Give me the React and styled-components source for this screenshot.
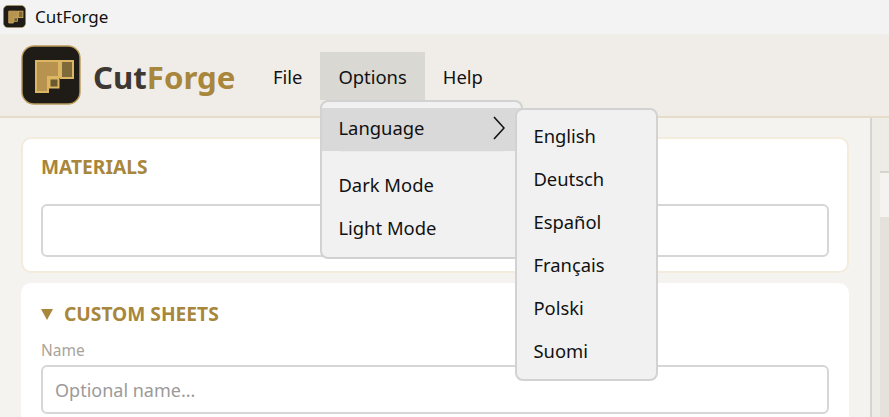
import React from 'react';
import styled, { createGlobalStyle } from 'styled-components';

const GlobalStyle = createGlobalStyle`
  html, body { margin: 0; padding: 0; height: 100%; overflow: hidden; }
  body { font-family: "Noto Sans", "Open Sans", sans-serif; color: #111; background: #f5f3ef; }
  * { box-sizing: border-box; }
`;

const Logo = ({ size }) => (
  <svg width={size} height={size} viewBox="0 0 60 60">
    <rect x="1" y="1" width="58" height="58" rx="12" fill="#1f1c18" stroke="#b99a58" strokeWidth="1.4" />
    <path d="M15 16H38V32H27V47H15Z" fill="#b8934f" stroke="#dcb662" strokeWidth="2" />
    <rect x="40" y="16" width="12" height="17" fill="#7f6a3a" stroke="#dcb662" strokeWidth="2" />
    <rect x="28.5" y="33.5" width="9" height="9" fill="#6a5830" stroke="#dcb662" strokeWidth="2" />
  </svg>
);

const menuLanguages = ['English', 'Deutsch', 'Español', 'Français', 'Polski', 'Suomi'];

export default function App() {
  return (
    <Page>
      <GlobalStyle />
      <TitleBar>
        <Logo size={23} />
        <TitleText>CutForge</TitleText>
      </TitleBar>
      <Header>
        <Logo size={60} />
        <Brand>Cut<BrandAccent>Forge</BrandAccent></Brand>
        <MenuBar>
          <MenuItem>File</MenuItem>
          <MenuItem $open>
            Options
            <Dropdown>
              <DropRow $active>
                Language
                <svg width="12" height="24" viewBox="0 0 12 24">
                  <path d="M1 1L11 12L1 23" fill="none" stroke="#111" strokeWidth="1.6" />
                </svg>
              </DropRow>
              <Divider />
              <DropRow>Dark Mode</DropRow>
              <DropRow>Light Mode</DropRow>
            </Dropdown>
            <SubMenu>
              {menuLanguages.map((l) => <SubRow key={l}>{l}</SubRow>)}
            </SubMenu>
          </MenuItem>
          <MenuItem>Help</MenuItem>
        </MenuBar>
      </Header>
      <Body>
        <LeftPanel>
          <Card $outlined>
            <CardTitle>MATERIALS</CardTitle>
            <EmptyBox />
          </Card>
          <Card $last>
            <CardTitle $row><Triangle />CUSTOM SHEETS</CardTitle>
            <FieldLabel>Name</FieldLabel>
            <TextInput placeholder="Optional name..." />
          </Card>
        </LeftPanel>
        <RightPanel>
          <PreviewTab />
          <PreviewArea />
        </RightPanel>
      </Body>
    </Page>
  );
}

const Page = styled.div`
  width: 889px;
  height: 417px;
  display: flex;
  flex-direction: column;
  overflow: hidden;
`;

const TitleBar = styled.div`
  height: 34px;
  flex: none;
  background: #f3f3f3;
  display: flex;
  align-items: center;
  gap: 9px;
  padding: 0 0 1px 3px;
`;

const TitleText = styled.span`
  font-size: 17px;
  color: #111;
`;

const Header = styled.div`
  height: 84px;
  flex: none;
  background: #f0ede8;
  border-bottom: 2px solid #e6dcc8;
  display: flex;
  align-items: center;
  padding: 0 0 1px 21px;
`;

const Brand = styled.div`
  font-size: 31.2px;
  font-weight: 700;
  color: #3d3833;
  margin: 4px 0 0 12px;
  width: 160px;
`;

const BrandAccent = styled.span`
  color: #a8863c;
`;

const MenuBar = styled.div`
  display: flex;
  align-self: flex-start;
  margin-top: 18px;
  margin-left: 2px;
`;

const MenuItem = styled.div`
  position: relative;
  height: 48px;
  padding: 0 18px;
  display: flex;
  align-items: center;
  font-size: 18.4px;
  background: ${(p) => (p.$open ? '#d9d8d3' : 'transparent')};
`;

const Dropdown = styled.div`
  position: absolute;
  top: 48px;
  left: 0;
  width: 203px;
  height: 159px;
  padding-top: 6px;
  background: #f1f1f1;
  border: 2px solid #d2d2d2;
  border-radius: 8px;
  z-index: 2;
`;

const DropRow = styled.div`
  height: 43px;
  padding: 0 16px 4px;
  display: flex;
  align-items: center;
  justify-content: space-between;
  background: ${(p) => (p.$active ? '#d9d9d9' : 'transparent')};
`;

const Divider = styled.div`
  height: 14px;
  margin: 0 18px;
  border-top: 1px solid #e9e9e9;
`;

const SubMenu = styled.div`
  position: absolute;
  top: 56px;
  left: 195px;
  width: 143px;
  height: 273px;
  padding-top: 6px;
  background: #f1f1f1;
  border: 2px solid #d2d2d2;
  border-radius: 8px;
  z-index: 3;
`;

const SubRow = styled.div`
  height: 43px;
  padding: 0 16px 4px;
  display: flex;
  align-items: center;
`;

const Body = styled.div`
  flex: 1;
  display: flex;
  min-height: 0;
`;

const LeftPanel = styled.div`
  width: 872px;
  flex: none;
  padding: 19px 21px 0 21px;
  background: #f5f3ef;
  border-right: 2px solid #d6d4cf;
  display: flex;
  flex-direction: column;
  gap: 10px;
`;

const Card = styled.div`
  background: #fff;
  border: 2px solid ${(p) => (p.$outlined ? '#f3ecdd' : '#fff')};
  border-radius: 10px;
  padding: 15px 18px 18px;
  ${(p) => (p.$last ? 'flex: 1; border-bottom: none; border-radius: 10px 10px 0 0; padding-top: 16px;' : 'height: 136px; flex: none;')}
`;

const CardTitle = styled.div`
  display: flex;
  align-items: center;
  gap: 11px;
  font-size: 19.2px;
  line-height: 26px;
  font-weight: 700;
  color: #a8863c;
  margin-bottom: ${(p) => (p.$row ? '13px' : '24px')};
`;

const Triangle = styled.span`
  width: 0;
  height: 0;
  border-left: 6px solid transparent;
  border-right: 6px solid transparent;
  border-top: 11px solid #a8863c;
`;

const EmptyBox = styled.div`
  height: 53px;
  border: 2px solid #d6d6d6;
  border-radius: 6px;
`;

const FieldLabel = styled.div`
  font-size: 15.5px;
  line-height: 20px;
  color: #a8a39b;
  margin-bottom: 5px;
`;

const TextInput = styled.input`
  display: block;
  width: 100%;
  height: 49px;
  border: 2px solid #d6d6d6;
  border-radius: 6px;
  padding: 0 12px;
  font: inherit;
  font-size: 18px;
  outline: none;
  &::placeholder { color: #9c9a98; opacity: 1; }
`;

const RightPanel = styled.div`
  flex: 1;
  padding: 53px 0 0 8px;
  background: #eeece7;
  display: flex;
  flex-direction: column;
`;

const PreviewTab = styled.div`
  height: 46px;
  flex: none;
  background: #f5f3ef;
  border-top: 2px solid #d6d4cf;
`;

const PreviewArea = styled.div`
  flex: 1;
  background: #e5e2dc;
`;
